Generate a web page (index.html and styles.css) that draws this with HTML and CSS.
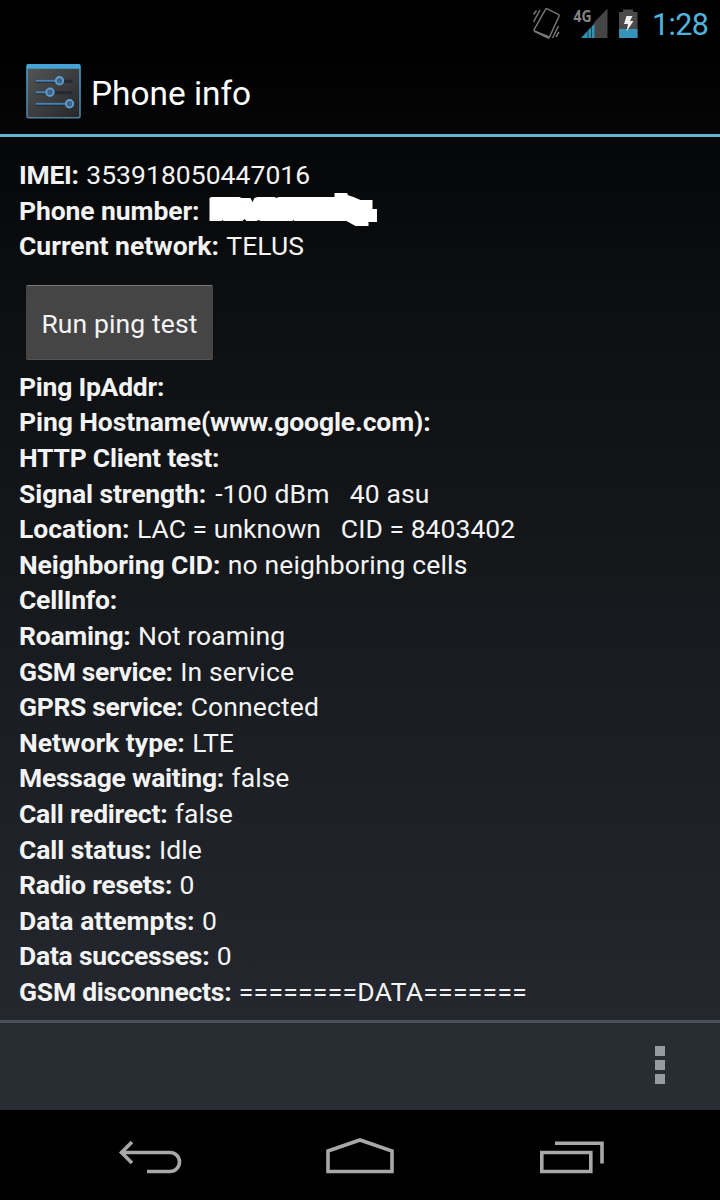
FILE: index.html
```html
<!DOCTYPE html>
<html lang="en">
<head>
<meta charset="utf-8">
<title>Phone info</title>
<link rel="stylesheet" href="styles.css">
</head>
<body>
<div class="screen">
  <div class="status">
    <svg class="status-icons" width="110" height="48" viewBox="530 0 110 48">
      <g fill="none" stroke="#777" stroke-width="1.500">
        <path d="M545.500 9.500Q546 8.300 547.300 8.900L558.300 14.300Q559.500 15 559 16.200L549.500 37Q548.800 38.500 547.300 37.700L535 31.500Q533.500 30.700 534.200 29.300Z"/>
        <path d="M533.500 14.500l3-4M533.500 22l6.500-12M558.500 26l-6 12M559 32l-3 5"/>
      </g>
      <path d="M534 30l15 6-1 2.500-14-7z" fill="#777"/>
      <path d="M607.500 8.500V38H594V22.500z" fill="#454545"/>
      <path d="M581 38l13.500-14.500V38z" fill="#3292b5"/>
      <path d="M588 30v8M591.500 27v11" stroke="#164457" stroke-width="1"/>
      <path d="M619 12h4V9.500h10V12h4.500v26H619z" fill="#4a4a4a"/>
      <path d="M619 29h18.500v9H619z" fill="#3594b7"/>
      <path d="M626.500 16h6l-2.500 5h3.500l-7 10.500 1.500-7.500h-4z" fill="#f0f0f0"/>
      <text x="573.500" y="22" class="net" textLength="18" lengthAdjust="spacingAndGlyphs">4G</text>
    </svg>
    <span class="clock">1:28</span>
  </div>
  <div class="header">
    <svg class="app-icon" width="56" height="56" viewBox="0.500 -0.300 56 56">
      <defs><linearGradient id="m" x1="0" y1="0" x2="1" y2="1"><stop offset="0" stop-color="#555658"/><stop offset="1" stop-color="#252729"/></linearGradient>
      <linearGradient id="e" x1="0" y1="0" x2="0" y2="1"><stop offset="0" stop-color="#429fce"/><stop offset="1" stop-color="#507e9e"/></linearGradient></defs>
      <rect x="1.500" y="1.500" width="53" height="53" rx="1.500" fill="url(#m)" stroke="url(#e)" stroke-width="1.600"/>
      <path d="M1.500 1h53v4.500h-53z" fill="#45a5d6"/>
      <path d="M10 18h37M10 29.500h37M10 41h33" stroke="#222a31" stroke-width="3"/>
      <path d="M10 17.500h22M10 29h12M10 40.500h33" stroke="#4682b5" stroke-width="2"/>
      <g fill="#3c638a" stroke="#609bcb" stroke-width="2"><circle cx="34" cy="17.500" r="3.700"/><circle cx="24.500" cy="29" r="3.700"/><circle cx="44" cy="40.500" r="3.700"/></g>
    </svg>
    <span class="title">Phone info</span>
  </div>
  <div class="content">
    <div class="row tight"><b>IMEI:</b> <span>353918050447016</span></div>
    <div class="row snug"><b>Phone number:</b> <svg class="redacted" width="170" height="34" viewBox="206.500 193 170 34"><path fill="#fff" d="M209 198L211 197H239L241 198H250L252 202L254 198L257 197H274L276 198L278 197H334V193H347V195L353 197L360 200H372V209H377V222H368V226H355L346 221H294L293 220L292 221H260L258 220L256 221H246L244 219L242 221H223L222 220L221 221H209Z"/></svg></div>
    <div class="row"><b>Current network:</b> <span>TELUS</span></div>
    <button class="ping">Run ping test</button>
    <div class="row tight"><b>Ping IpAddr:</b></div>
    <div class="row snug"><b>Ping Hostname(www.google.com):</b></div>
    <div class="row tight"><b>HTTP Client test:</b></div>
    <div class="row wide signal"><b>Signal strength:</b> <span>-100 dBm   40 asu</span></div>
    <div class="row"><b>Location:</b> <span>LAC = unknown   CID = 8403402</span></div>
    <div class="row snug wide"><b>Neighboring CID:</b> <span>no neighboring cells</span></div>
    <div class="row tight"><b>CellInfo:</b></div>
    <div class="row tight"><b>Roaming:</b> <span>Not roaming</span></div>
    <div class="row tighter wide"><b>GSM service:</b> <span>In service</span></div>
    <div class="row tighter wide"><b>GPRS service:</b> <span>Connected</span></div>
    <div class="row"><b>Network type:</b> <span>LTE</span></div>
    <div class="row tight"><b>Message waiting:</b> <span>false</span></div>
    <div class="row tight"><b>Call redirect:</b> <span>false</span></div>
    <div class="row snug"><b>Call status:</b> <span>Idle</span></div>
    <div class="row tight"><b>Radio resets:</b> <span>0</span></div>
    <div class="row"><b>Data attempts:</b> <span>0</span></div>
    <div class="row tight"><b>Data successes:</b> <span>0</span></div>
    <div class="row tight wider"><b>GSM disconnects:</b> <span>========DATA=======</span></div>
  </div>
  <div class="actions"><div class="overflow"><i></i><i></i><i></i></div></div>
  <svg class="nav" width="720" height="90" viewBox="0 1110.500 720 90">
    <g fill="none" stroke="#a8a8a8" stroke-width="3.600">
      <path d="M132 1142.500l-10.500 10.500 10.500 10.500M122 1153h48a9.500 9.500 0 0 1 0 19h-23"/>
      <path d="M328 1151.500l32-11 32 11v20.500h-64z"/>
      <path d="M541.800 1153h49v19h-49zM555 1143.800h47v20.200"/>
    </g>
  </svg>
</div>
</body>
</html>
```
FILE: styles.css
```css
body { margin: 0; background: #000; }
.screen {
  width: 720px; height: 1200px; overflow: hidden;
  display: flex; flex-direction: column;
  font-family: Roboto, "Liberation Sans", sans-serif; color: #f3f3f3;
  background: linear-gradient(#000 48px, #050607 137px, #0d0f11 320px, #272b32 1110px);
}
.status { height: 48px; flex: none; display: flex; justify-content: flex-end; align-items: center; background: #000; padding-right: 11px; box-sizing: border-box; }
.status-icons { margin-right: 12px; }
.net { font: bold 16px "Open Sans", sans-serif; fill: #858585; }
.clock { font-size: 30.5px; line-height: 46px; padding-top: 2px; letter-spacing: -.6px; color: #4fb3dc; width: 57px; white-space: nowrap; }
.header { height: 89px; flex: none; box-sizing: border-box; border-bottom: 3px solid #62b5d2; display: flex; align-items: center; padding: 0 0 0 26px; }
.title { font-size: 33.4px; color: #fff; margin-left: 9px; line-height: 40px; padding-top: 5px; }
.content { height: 883px; flex: none; box-sizing: border-box; padding: 20px 0 0 19px; }
.row { height: 35.6px; line-height: 35.6px; font-size: 26.5px; white-space: pre; display: flex; }
.row b { font-weight: 700; margin-right: 7.4px; }
.row span { letter-spacing: .04px; }
.snug b { letter-spacing: -.1px; }
.tight b { letter-spacing: -.25px; }
.tighter b { letter-spacing: -.36px; }
.wide span { letter-spacing: .14px; }
.wider span { letter-spacing: .28px; }
.signal b { letter-spacing: -.1px; margin-right: 9px; }
.redacted { flex: none; }
.ping {
  display: block; width: 187px; height: 75px; margin: 21px 0 9px 7px; padding: 2px 0 0;
  font: 26.5px Roboto, sans-serif; letter-spacing: .12px; color: #f3f3f3; background: #454546;
  border: 0; border-top: 1px solid #77787a; border-bottom: 1px solid #555; border-radius: 2px;
}
.actions { height: 90px; flex: none; box-sizing: border-box; border-top: 3px solid #4b4f57; background: #282c33; display: flex; justify-content: flex-end; align-items: center; padding: 0 55px 3px 0; }
.overflow { display: flex; flex-direction: column; gap: 4px; }
.overflow i { width: 10px; height: 10px; background: #969ba0; }
.nav { display: block; flex: none; background: #000; }
```
